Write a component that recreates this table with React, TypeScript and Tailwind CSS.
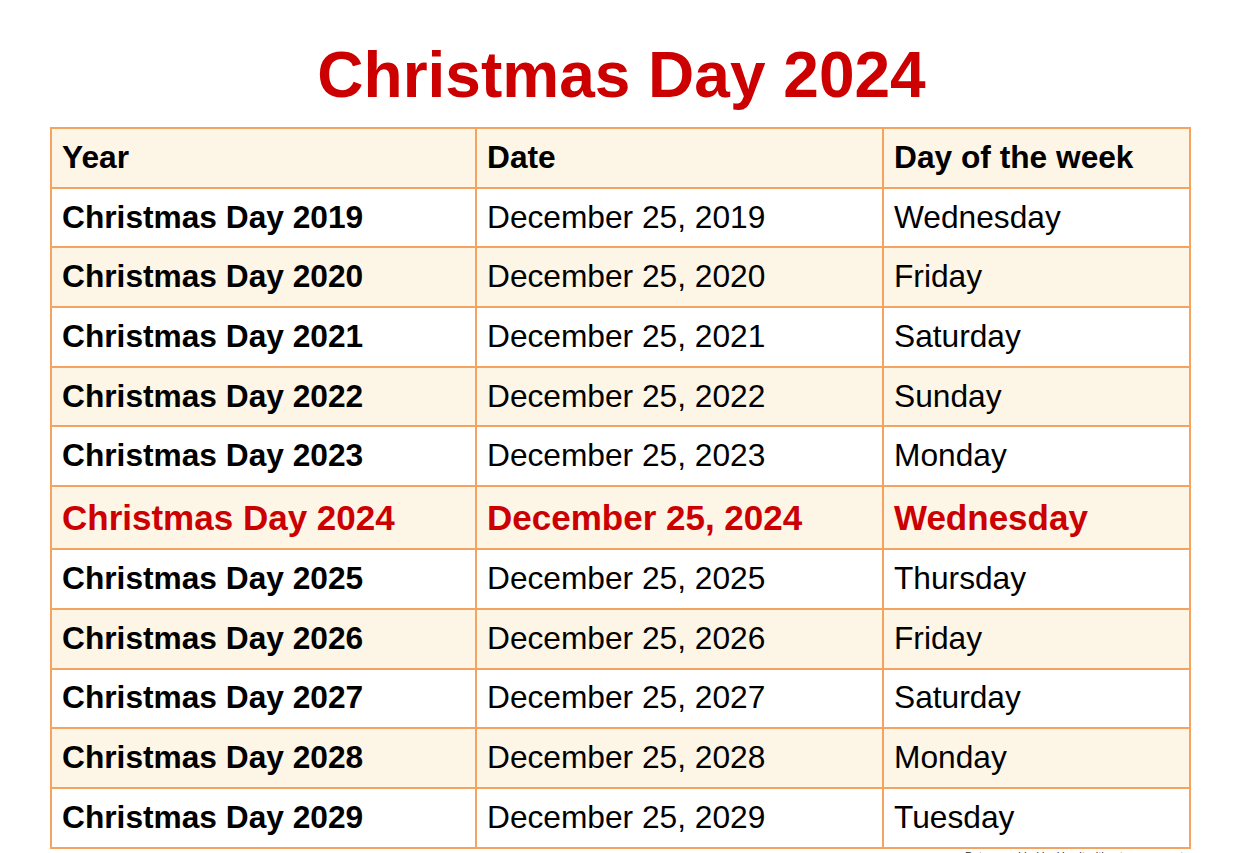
import React from "react";

type Row = { year: string; date: string; day: string; current?: boolean };

const rows: Row[] = [
  { year: "Christmas Day 2019", date: "December 25, 2019", day: "Wednesday" },
  { year: "Christmas Day 2020", date: "December 25, 2020", day: "Friday" },
  { year: "Christmas Day 2021", date: "December 25, 2021", day: "Saturday" },
  { year: "Christmas Day 2022", date: "December 25, 2022", day: "Sunday" },
  { year: "Christmas Day 2023", date: "December 25, 2023", day: "Monday" },
  { year: "Christmas Day 2024", date: "December 25, 2024", day: "Wednesday", current: true },
  { year: "Christmas Day 2025", date: "December 25, 2025", day: "Thursday" },
  { year: "Christmas Day 2026", date: "December 25, 2026", day: "Friday" },
  { year: "Christmas Day 2027", date: "December 25, 2027", day: "Saturday" },
  { year: "Christmas Day 2028", date: "December 25, 2028", day: "Monday" },
  { year: "Christmas Day 2029", date: "December 25, 2029", day: "Tuesday" },
];

const cell = "border-2 border-[#f4a460] px-[10px] py-0 text-left align-middle";

export default function App() {
  return (
    <div
      className="min-h-screen bg-white text-black"
      style={{ fontFamily: '"Liberation Sans", Arial, sans-serif' }}
    >
      <h1 className="pt-[38px] text-center text-[64px] font-bold leading-[74px] text-[#cc0000]">
        Christmas Day 2024
      </h1>

      <div className="mt-[15px] pl-[50px] pr-[52px]">
        <table className="w-full border-collapse text-[31.7px] leading-none">
          <colgroup>
            <col className="w-[425px]" />
            <col className="w-[407px]" />
            <col />
          </colgroup>
          <thead>
            <tr className="h-[59.7px] bg-[#fdf5e6]">
              <th className={`${cell} font-bold`}>Year</th>
              <th className={`${cell} font-bold`}>Date</th>
              <th className={`${cell} font-bold`}>Day of the week</th>
            </tr>
          </thead>
          <tbody>
            {rows.map((r, i) =>
              r.current ? (
                <tr key={r.year} className="h-[63px] bg-[#fdf5e6] text-[35px] font-bold text-[#cc0000]">
                  <td className={cell}>{r.year}</td>
                  <td className={cell}>{r.date}</td>
                  <td className={cell}>{r.day}</td>
                </tr>
              ) : (
                <tr key={r.year} className={`h-[59.7px] ${i % 2 === 1 ? "bg-[#fdf5e6]" : "bg-white"}`}>
                  <td className={`${cell} font-bold`}>{r.year}</td>
                  <td className={cell}>{r.date}</td>
                  <td className={cell}>{r.day}</td>
                </tr>
              )
            )}
          </tbody>
        </table>
        <p className="mt-[1px] text-right text-[11px] leading-[13px] text-[#333]">
          Dates provided by Use it without any warranty.
        </p>
      </div>
    </div>
  );
}
